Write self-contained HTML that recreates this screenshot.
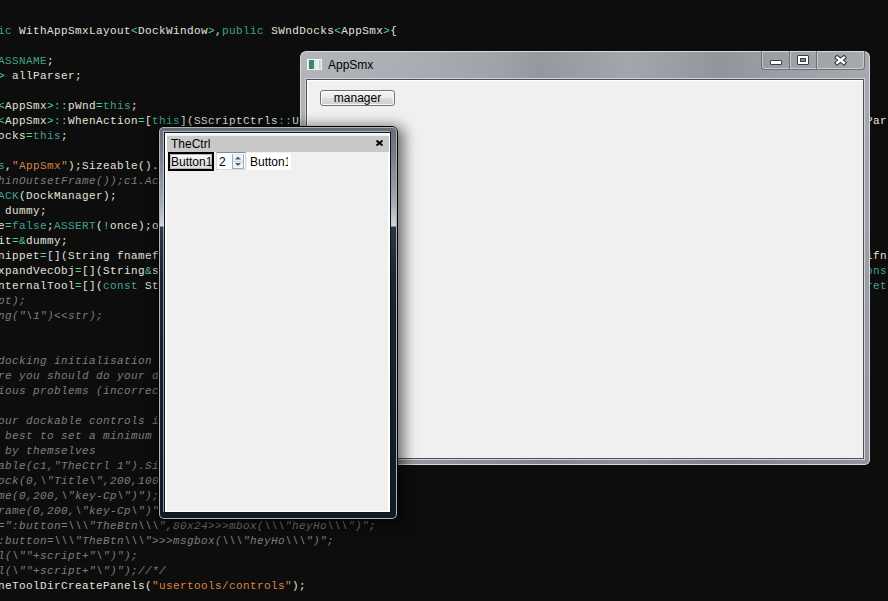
<!DOCTYPE html>
<html><head><meta charset="utf-8">
<style>
html,body{margin:0;padding:0;}
body{width:888px;height:601px;overflow:hidden;background:#0d0d0d;position:relative;font-family:"Liberation Sans",sans-serif;}
.ln{position:absolute;margin-top:-10px;font-family:"Liberation Mono",monospace;font-size:11px;line-height:15px;letter-spacing:0.4px;white-space:pre;}
.ln i{font-style:normal}
.w{color:#e4e4dc}
.g{color:#55d090}
.t{color:#42a290}
.s{color:#dc8440}
.ln i.c{color:#7f7f7d;font-style:italic}
.abs{position:absolute;box-sizing:border-box;}
/* AppSmx window */
#app{left:300px;top:51px;width:570px;height:414px;border-radius:6px 6px 5px 5px;
 background:linear-gradient(rgba(255,255,255,.06) 0,rgba(255,255,255,.04) 40px,rgba(0,0,0,0) 120px,rgba(0,0,0,.1) 414px),linear-gradient(90deg,#aeb2b7 0px,#a4a8ae 120px,#9a9ea4 200px,#8f9399 240px,#9ea2a8 330px,#8c9096 420px,#999da3 500px,#a2a6ab 570px);
 box-shadow:inset 0 0 0 1px #d6d9dd;}
#appcl{left:6px;top:28px;width:558px;height:380px;background:#f0f0f0;border:1px solid #4d5157;
 box-shadow:0 0 0 1px #d0d3d7, inset 1px 1px 0 #fff;}
#appicon{left:7px;top:8px;width:15px;height:11px;border:1px solid #f2f6f4;border-color:#f4f8f6 #eef2f0 #f0f4f2 #e8f0ec;background:linear-gradient(90deg,#e4eeea 0,#e4eeea 1px,#3f7a64 1px,#4a8670 6px,#c8eadc 6px,#def2ea 8px,#e8ecec 8px,#eceeee 11px,#c4c8cc 11px,#dadede 13px);}
#apptitle{left:28px;top:7px;font-size:12px;line-height:15px;color:#000;}
#capbtns{left:461px;top:0px;width:104px;height:19px;border:1px solid #6d7177;border-top:none;border-radius:0 0 4px 4px;
 box-shadow:inset 0 -1px 0 rgba(255,255,255,.45), inset 1px 0 0 rgba(255,255,255,.4), inset -1px 0 0 rgba(255,255,255,.4);}
.sep{top:0;width:1px;height:18px;background:#6d7177;box-shadow:1px 0 0 rgba(255,255,255,.4);}
#btnmgr{left:13px;top:10px;width:75px;height:16px;border:1px solid #707070;border-radius:3px;
 background:linear-gradient(#f2f2f2 0,#ebebeb 50%,#dddddd 51%,#cfcfcf 100%);
 box-shadow:inset 0 0 0 1px #fcfcfc;font-size:12px;line-height:15px;text-align:center;color:#000;}
/* TheCtrl window */
#ctl{left:158px;top:126px;width:240px;height:394px;border-radius:6px;border:1px solid #000;box-shadow:3px 3px 14px 3px rgba(0,0,0,.55);
 background:linear-gradient(#666d77 0px,#79808a 30px,#a2a9b1 75px,#d2d7dc 99px,#2e3844 100px,#1a2531 150px,#0f1b27 393px);}
#ctlin{left:0;top:0;width:238px;height:392px;border-radius:5px;box-shadow:inset 0 0 0 1px #aab4be;}
#ctlcl{left:5px;top:5px;width:227px;height:381px;background:#f0f0f0;border:1px solid #101418;
 box-shadow:-1px -1px 0 rgba(220,228,236,.6), inset 2px 1px 0 #fff, inset -2px -1px 0 #fff;}
#ctltitle{left:2px;top:3px;width:222px;height:16px;background:#c9c9c9;}
#ctltitletxt{left:4px;top:1px;font-size:12px;line-height:15px;color:#000;}
#ctlx{left:210px;top:5px;width:8px;height:8px;}
#btn1{left:3px;top:19px;width:46px;height:19px;border:2px solid #000;background:#d8d8d8;}
#btn1in{left:0;top:0;width:42px;height:15px;border-radius:3px;border:1px solid #b4b4b4;background:linear-gradient(#fbfbfb,#ececec 50%,#e2e2e2 51%,#dedede);line-height:14px!important;font-size:12px;line-height:16px;text-align:center;color:#000;}
#edit{left:51px;top:19px;width:30px;height:18px;border:1px solid #d0dce8;border-top-color:#7090a8;background:#fff;}
#spin{left:15px;top:1px;width:12px;height:15px;}
#lbl2{left:82px;top:20px;width:44px;height:17px;background:#fff;overflow:hidden;}
</style></head><body>
<div class="ln" style="left:-2px;top:34px"><i class="t">ic</i><i class="w"> WithAppSmxLayout</i><i class="g">&lt;</i><i class="w">DockWindow</i><i class="g">&gt;</i><i class="w">,</i><i class="t">public</i><i class="w"> SWndDocks</i><i class="g">&lt;</i><i class="w">AppSmx</i><i class="g">&gt;</i><i class="w">{</i></div>
<div class="ln" style="left:-2px;top:64px"><i class="t">ASSNAME</i><i class="w">;</i></div>
<div class="ln" style="left:-2px;top:79px"><i class="g">&gt;</i><i class="w"> allParser;</i></div>
<div class="ln" style="left:-2px;top:109px"><i class="g">&lt;</i><i class="w">AppSmx</i><i class="g">&gt;::</i><i class="w">pWnd</i><i class="g">=</i><i class="t">this</i><i class="w">;</i></div>
<div class="ln" style="left:-2px;top:124px"><i class="g">&lt;</i><i class="w">AppSmx</i><i class="g">&gt;::</i><i class="w">WhenAction</i><i class="g">=</i><i class="w">[</i><i class="t">this</i><i class="w">](SScriptCtrls</i><i class="g">::</i><i class="w">U</i></div>
<div class="ln" style="left:866px;top:124px"><i class="w">Par</i></div>
<div class="ln" style="left:-2px;top:139px"><i class="w">ocks</i><i class="g">=</i><i class="t">this</i><i class="w">;</i></div>
<div class="ln" style="left:-2px;top:169px"><i class="t">s</i><i class="w">,</i><i class="s">"AppSmx"</i><i class="w">);Sizeable().</i></div>
<div class="ln" style="left:-2px;top:184px"><i class="c">hinOutsetFrame());c1.Ac</i></div>
<div class="ln" style="left:-2px;top:199px"><i class="t">ACK</i><i class="w">(DockManager);</i></div>
<div class="ln" style="left:-2px;top:214px"><i class="w"> dummy;</i></div>
<div class="ln" style="left:-2px;top:229px"><i class="w">e</i><i class="g">=</i><i class="t">false</i><i class="w">;</i><i class="t">ASSERT</i><i class="w">(</i><i class="g">!</i><i class="w">once);o</i></div>
<div class="ln" style="left:-2px;top:244px"><i class="w">it</i><i class="g">=&amp;</i><i class="w">dummy;</i></div>
<div class="ln" style="left:-2px;top:259px"><i class="w">nippet</i><i class="g">=</i><i class="w">[](String fnamef</i></div>
<div class="ln" style="left:866px;top:259px"><i class="w">ifn</i></div>
<div class="ln" style="left:-2px;top:274px"><i class="w">xpandVecObj</i><i class="g">=</i><i class="w">[](String</i><i class="g">&amp;</i><i class="w">s</i></div>
<div class="ln" style="left:866px;top:274px"><i class="t">ons</i></div>
<div class="ln" style="left:-2px;top:289px"><i class="w">nternalTool</i><i class="g">=</i><i class="w">[](</i><i class="t">const</i><i class="w"> St</i></div>
<div class="ln" style="left:866px;top:289px"><i class="t">rett</i></div>
<div class="ln" style="left:-2px;top:304px"><i class="c">pt);</i></div>
<div class="ln" style="left:-2px;top:319px"><i class="c">ng("\1")&lt;&lt;str);</i></div>
<div class="ln" style="left:-2px;top:364px"><i class="c">docking initialisation</i></div>
<div class="ln" style="left:-2px;top:379px"><i class="c">re you should do your d</i></div>
<div class="ln" style="left:-2px;top:394px"><i class="c">ious problems (incorrec</i></div>
<div class="ln" style="left:-2px;top:424px"><i class="c">our dockable controls i</i></div>
<div class="ln" style="left:-2px;top:439px"><i class="c"> best to set a minimum</i></div>
<div class="ln" style="left:-2px;top:454px"><i class="c"> by themselves</i></div>
<div class="ln" style="left:-2px;top:469px"><i class="c">able(c1,"TheCtrl 1").Si</i></div>
<div class="ln" style="left:-2px;top:484px"><i class="c">ock(0,\"Title\",200,100</i></div>
<div class="ln" style="left:-2px;top:499px"><i class="c">me(0,200,\"key-Cp\")");</i></div>
<div class="ln" style="left:-2px;top:514px"><i class="c">rame(0,200,\"key-Cp\")"</i></div>
<div class="ln" style="left:-2px;top:529px"><i class="c">=":button=\\\"TheBtn\\\",80x24&gt;&gt;&gt;mbox(\\\"heyHo\\\")";</i></div>
<div class="ln" style="left:-2px;top:544px"><i class="c">:button=\\\"TheBtn\\\"&gt;&gt;&gt;msgbox(\\\"heyHo\\\")";</i></div>
<div class="ln" style="left:-2px;top:559px"><i class="c">l(\""+script+"\")");</i></div>
<div class="ln" style="left:-2px;top:574px"><i class="c">l(\""+script+"\")");//*/</i></div>
<div class="ln" style="left:-2px;top:589px"><i class="w">neToolDirCreatePanels(</i><i class="s">"usertools/controls"</i><i class="w">);</i></div>
<div id="app" class="abs">
  <div id="appicon" class="abs"></div>
  <div id="apptitle" class="abs">AppSmx</div>
  <div id="capbtns" class="abs">
    <div class="sep abs" style="left:27px"></div>
    <div class="sep abs" style="left:54px"></div>
    <div class="abs" style="left:8px;top:9px;width:12px;height:5px;border:1px solid #3a3e44;background:#fff;border-radius:1px"></div>
    <div class="abs" style="left:35px;top:4px;width:12px;height:10px;border:1px solid #3a3e44;background:#fff;border-radius:1px"><div class="abs" style="left:2px;top:2px;width:6px;height:4px;border:1px solid #3a3e44;background:#8a8e94"></div></div>
    <svg class="abs" style="left:72px;top:4px" width="13" height="11" viewBox="0 0 13 11"><path d="M3.2 2.6 L9.8 7.8 M9.8 2.6 L3.2 7.8" stroke="#3a3e44" stroke-width="4.6" stroke-linecap="square"/><path d="M3.2 2.6 L9.8 7.8 M9.8 2.6 L3.2 7.8" stroke="#fff" stroke-width="2.4" stroke-linecap="square"/></svg>
  </div>
  <div id="appcl" class="abs">
    <div id="btnmgr" class="abs">manager</div>
  </div>
</div>
<div id="ctl" class="abs">
  <div id="ctlin" class="abs"></div>
  <div id="ctlcl" class="abs">
    <div id="ctltitle" class="abs"><div id="ctltitletxt" class="abs">TheCtrl</div>
      <svg class="abs" style="left:208px;top:3px" width="9" height="8" viewBox="0 0 9 8"><path d="M1.5 1.5 L7.5 6.5 M7.5 1.5 L1.5 6.5" stroke="#000" stroke-width="1.9"/></svg></div>
    <div id="btn1" class="abs"><div id="btn1in" class="abs">Button1</div></div>
    <div id="edit" class="abs"><div class="abs" style="left:2px;top:1px;font-size:12px;line-height:16px">2</div>
      <div id="spin" class="abs">
        <div class="abs" style="left:0;top:0;width:12px;height:15px;border:1px solid #a4aab0;border-top-color:#dfe6ee;background:linear-gradient(#f6f8fa,#e8ecf2 45%,#c8d4dc 50%,#eef1f4 56%,#f4f6f8)"></div>
        <svg class="abs" style="left:2px;top:1px" width="8" height="12" viewBox="0 0 8 12"><path d="M1 4.5 L4 1.5 L7 4.5 Z M1 8 L7 8 L4 11 Z" fill="#4a5a78"/></svg>
      </div></div>
    <div id="lbl2" class="abs"><div class="abs" style="left:3px;top:1px;width:38px;height:16px;overflow:hidden;font-size:12px;line-height:16px;white-space:nowrap">Button1</div></div>
  </div>
</div>
</body></html>
